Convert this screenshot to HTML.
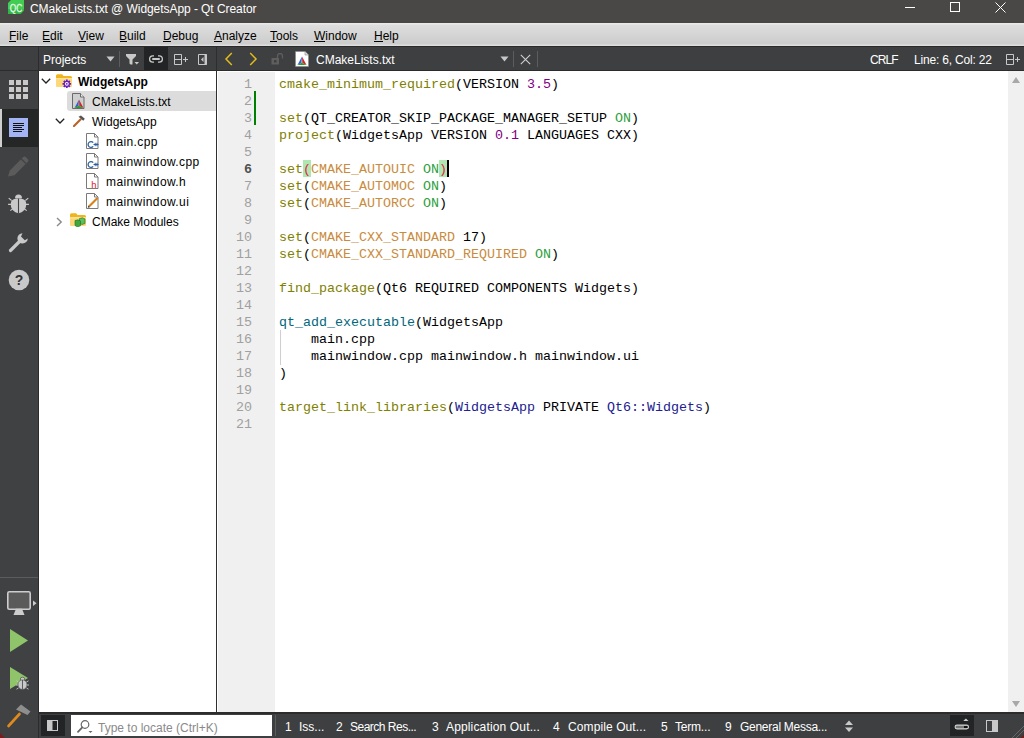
<!DOCTYPE html>
<html><head><meta charset="utf-8"><style>
*{margin:0;padding:0;box-sizing:border-box}
html,body{width:1024px;height:738px;overflow:hidden;background:#fff;font-family:"Liberation Sans",sans-serif;font-size:12px}
div,span,svg{position:absolute;display:block}
b{font-weight:normal}
.t{white-space:pre;line-height:14px}
#title{left:0;top:0;width:1024px;height:23px;background:#4a4846;color:#fff}
#menubar{left:0;top:23px;width:1024px;height:23px;background:linear-gradient(#e9e9e9 0,#e9e9e9 1px,#dedede 2px,#cccccc 21px,#dedede 22px);color:#000}
#menubar span{top:6px}
#menubar i{position:absolute;top:18px;height:1px;background:#000}
#toolbar{left:0;top:46px;width:1024px;height:25px;background:#3e3f41;border-bottom:1px solid #2c2c2d}
#modebar{left:0;top:71px;width:38px;height:667px;background:#404143}
#modeline{left:38px;top:46px;width:1px;height:692px;background:#2c2c2d}
#tree{left:39px;top:71px;width:177px;height:641px;background:#fff;color:#000}
#vsep{left:216px;top:46px;width:1px;height:666px;background:#2e2e2e}
#gutter{left:218px;top:72px;width:57px;height:640px;background:#f0f0f0}
#code{left:275px;top:71px;width:733px;height:641px;background:#fff}
#scroll{left:1008px;top:71px;width:16px;height:641px;background:#f0f0f0}
#status{left:39px;top:712px;width:985px;height:26px;background:#3e3f41;border-top:2px solid #2c2c2d;color:#fff}
.mono{font-family:"Liberation Mono",monospace;font-size:13.333px;line-height:17px;white-space:pre}
.ln{color:#a0a0a0;text-align:right;width:35px;left:217px;top:76px}
.f{color:#808000}
.q{color:#00677c}
.v{color:#c98c3e}
.on{color:#2f9f3f}
.n{color:#800080}
.k{color:#202090}
.k0{color:#000}
.bm{color:#e0284a}
.bm2{color:#e0284a}
.w{color:#fff}
</style></head><body>
<div id="title">
  <svg style="left:8px;top:0" width="16" height="14" viewBox="0 0 16 14"><path d="M3 0H16V10.5L12.5 14H0V3Z" fill="#41cd52"/><path d="M0 9H16V10.5L12.5 14H0Z" fill="#22a83a" opacity=".6"/><text x="8" y="11.5" font-family="Liberation Sans" font-size="11.5" fill="#e6f6e6" stroke="#e6f6e6" stroke-width="0.3" text-anchor="middle" textLength="12.5" lengthAdjust="spacingAndGlyphs">QC</text></svg>
  <span class="t" style="left:30px;top:2px;color:#fff;letter-spacing:-0.06px">CMakeLists.txt @ WidgetsApp - Qt Creator</span>
  <div style="left:905px;top:7px;width:10px;height:1px;background:#fff"></div>
  <div style="left:950px;top:2px;width:10px;height:10px;border:1px solid #fff"></div>
  <svg style="left:995px;top:2px" width="11" height="11" viewBox="0 0 11 11"><path d="M0.5 0.5L10.5 10.5M10.5 0.5L0.5 10.5" stroke="#fff" stroke-width="1"/></svg>
</div>

<div id="menubar">
<span class="t" style="left:9px">File</span><i style="left:9px;width:7px"></i>
<span class="t" style="left:42px">Edit</span><i style="left:43px;width:7px"></i>
<span class="t" style="left:78px">View</span><i style="left:79px;width:7px"></i>
<span class="t" style="left:119px">Build</span><i style="left:120px;width:7px"></i>
<span class="t" style="left:163px">Debug</span><i style="left:163px;width:8px"></i>
<span class="t" style="left:214px">Analyze</span><i style="left:214px;width:8px"></i>
<span class="t" style="left:270px">Tools</span><i style="left:270px;width:7px"></i>
<span class="t" style="left:314px">Window</span><i style="left:314px;width:11px"></i>
<span class="t" style="left:374px">Help</span><i style="left:374px;width:9px"></i>
</div>

<div id="toolbar">
  <span class="t w" style="left:43px;top:7px">Projects</span>
  <svg style="left:106px;top:56px;margin-top:-46px" width="9" height="6" viewBox="0 0 9 6"><path d="M0.5 0.5H8.5L4.5 5.5Z" fill="#c8c8c8"/></svg>
  <div style="left:119px;top:5px;width:1px;height:16px;background:#5c5d5f"></div>
  <svg style="left:125px;top:7px" width="15" height="13" viewBox="0 0 15 13"><path d="M1 1H11V3L7.5 6.5V11.5H5.5L4.5 10.5V6.5L1 3Z" fill="#c8c8c8"/><path d="M9.5 9H14L11.75 11.5Z" fill="#c8c8c8"/></svg>
  <div style="left:144px;top:0;width:24px;height:24px;background:#232425"></div>
  <svg style="left:148px;top:8px" width="16" height="10" viewBox="0 0 16 10"><path d="M6 1.8H4.8A3.2 3.2 0 0 0 4.8 8.2H6M10 1.8H11.2A3.2 3.2 0 0 1 11.2 8.2H10" stroke="#c8c8c8" stroke-width="1.3" fill="none"/><path d="M5 5H11" stroke="#c8c8c8" stroke-width="2" stroke-linecap="round"/></svg>
  <svg style="left:173px;top:7px" width="16" height="13" viewBox="0 0 16 13"><path d="M1.5 1.5H8.5V11.5H1.5ZM1.5 6.5H8.5" stroke="#c8c8c8" stroke-width="1" fill="none"/><path d="M10 6.5H15M12.5 4V9" stroke="#c8c8c8" stroke-width="1"/></svg>
  <svg style="left:197px;top:7px" width="11" height="13" viewBox="0 0 11 13"><path d="M1.5 1.5H9.5V11.5H1.5Z" stroke="#c8c8c8" stroke-width="1" fill="none"/><path d="M8.5 1V12" stroke="#c8c8c8" stroke-width="2"/><path d="M6.5 4V9L4 6.5Z" fill="#c8c8c8"/></svg>
  <svg style="left:224px;top:6px" width="10" height="14" viewBox="0 0 10 14"><path d="M7.8 1L2 7L7.8 13" stroke="#e4bb1c" stroke-width="1.5" fill="none"/></svg>
  <svg style="left:248px;top:6px" width="10" height="14" viewBox="0 0 10 14"><path d="M2.2 1L8 7L2.2 13" stroke="#e4bb1c" stroke-width="1.5" fill="none"/></svg>
  <svg style="left:271px;top:7px" width="14" height="12" viewBox="0 0 14 12"><path d="M0.5 5H8V11.5H0.5Z" fill="#5e5e5e"/><path d="M6.5 5V3A2.5 2.5 0 0 1 11.5 3V5.5" stroke="#5e5e5e" stroke-width="1.3" fill="none"/><rect x="3" y="7" width="2.5" height="2.5" fill="#3e3f41"/></svg>
  <svg style="left:295px;top:5px" width="14" height="16" viewBox="0 0 14 16"><path d="M0.5 0.5H10L13.5 4V15.5H0.5Z" fill="#fff" stroke="#888" stroke-width="0.6"/><path d="M10 0.5V4H13.5" fill="#ddd" stroke="#888" stroke-width="0.6"/><g transform="translate(0.5,1.5)"><path d="M6.5 4L2 12.5L6 10.5Z" fill="#3b5fd0"/><path d="M6.5 4L11 12.5L6.8 10.5Z" fill="#d02828"/><path d="M2 12.5L6.2 10.3L11 12.5Z" fill="#2aa02a"/></g></svg>
  <span class="t w" style="left:316px;top:7px">CMakeLists.txt</span>
  <svg style="left:500px;top:10px" width="9" height="6" viewBox="0 0 9 6"><path d="M0.5 0.5H8.5L4.5 5.5Z" fill="#c8c8c8"/></svg>
  <div style="left:513px;top:5px;width:1px;height:16px;background:#5c5d5f"></div>
  <svg style="left:520px;top:8px" width="11" height="11" viewBox="0 0 11 11"><path d="M0.8 0.8L10.2 10.2M10.2 0.8L0.8 10.2" stroke="#d0d0d0" stroke-width="1.1"/></svg>
  <div style="left:537px;top:5px;width:1px;height:16px;background:#5c5d5f"></div>
  <span class="t w" style="left:870px;top:7px;letter-spacing:-0.9px">CRLF</span>
  <span class="t w" style="left:914px;top:7px;letter-spacing:-0.18px">Line: 6, Col: 22</span>
  <svg style="left:1005px;top:7px" width="16" height="13" viewBox="0 0 16 13"><path d="M1.5 1.5H8.5V11.5H1.5ZM1.5 6.5H8.5" stroke="#c8c8c8" stroke-width="1" fill="none"/><path d="M10 6.5H15M12.5 4V9" stroke="#c8c8c8" stroke-width="1"/></svg>
</div>

<div id="modebar">
  <svg style="left:9px;top:9px" width="20" height="20" viewBox="0 0 20 20"><g fill="#c9c9c9">
  <rect x="0" y="0" width="5" height="5"/><rect x="7" y="0" width="5" height="5"/><rect x="14" y="0" width="5" height="5"/>
  <rect x="0" y="7" width="5" height="5"/><rect x="7" y="7" width="5" height="5"/><rect x="14" y="7" width="5" height="5"/>
  <rect x="0" y="14" width="5" height="5"/><rect x="7" y="14" width="5" height="5"/><rect x="14" y="14" width="5" height="5"/></g></svg>
  <div style="left:0;top:38px;width:38px;height:38px;background:#252626"></div>
  <div style="left:0;top:38px;width:2px;height:38px;background:#cfcfcf"></div>
  <svg style="left:9px;top:47px" width="20" height="20" viewBox="0 0 20 20"><rect x="0" y="0" width="19" height="19" fill="#a3b4f4"/><g stroke="#111" stroke-width="1"><path d="M4 5.5H15M4 7.5H15M4 9.5H13M4 11.5H15M4 13.5H13"/></g></svg>
  <svg style="left:8px;top:85px" width="21" height="21" viewBox="0 0 21 21"><path d="M0 20.5L1.8 14.5L15 1.3Q16.5 -0.2 18 1.3L19.7 3Q21.2 4.5 19.7 6L6.5 19.2Z" fill="#5b5b5c"/><path d="M13.3 3L18 7.7" stroke="#404143" stroke-width="1.2"/></svg>
  <svg style="left:8px;top:122px" width="21" height="21" viewBox="0 0 21 21"><g fill="#c9c9c9"><path d="M7 5.2A3.5 3.6 0 0 1 14 5.2Z"/><path d="M10.5 5.6C4 5.6 2.8 8.2 2.8 11.5C2.8 16 6 19.5 10.5 20.3C15 19.5 18.2 16 18.2 11.5C18.2 8.2 17 5.6 10.5 5.6Z"/></g><path d="M10.5 5.6V20.3" stroke="#404143" stroke-width="1.1"/><g stroke="#c9c9c9" stroke-width="1.1"><path d="M0.7 5.1L3.6 7.5M0.1 11.4H3M2.3 17.6L4.8 15.8M20.3 5.1L17.4 7.5M20.9 11.4H18M18.7 17.6L16.2 15.8"/></g></svg>
  <svg style="left:8px;top:161px" width="21" height="21" viewBox="0 0 21 21"><path d="M2.5 18.5L11.5 9.5" stroke="#c9c9c9" stroke-width="3.2" stroke-linecap="round"/><path d="M14.5 1.2A5.2 5.2 0 1 0 19.8 6.5L16.8 8.2L13 4.5Z" fill="#c9c9c9"/></svg>
  <svg style="left:8px;top:198px" width="22" height="22" viewBox="0 0 22 22"><circle cx="11" cy="11" r="10.3" fill="#c9c9c9"/><text x="11" y="16" font-family="Liberation Sans" font-weight="bold" font-size="14" fill="#333" text-anchor="middle">?</text></svg>
  <div style="left:0;top:506px;width:38px;height:1px;background:#5b5c5e"></div>
  <svg style="left:7px;top:520px" width="30" height="25" viewBox="0 0 30 25"><rect x="0.8" y="0.8" width="22.4" height="17.4" rx="1.5" fill="#5a5a5a" stroke="#cdcdcd" stroke-width="1.6"/><path d="M6.5 24L9 17.8H15L17.5 24Z" fill="#cdcdcd"/><path d="M26 9.5L29.5 12.2L26 15Z" fill="#cdcdcd"/></svg>
  <svg style="left:10px;top:558px" width="18" height="23" viewBox="0 0 18 23"><path d="M0 0L18 11.5L0 23Z" fill="#8fc46b"/></svg>
  <svg style="left:10px;top:596px" width="20" height="24" viewBox="0 0 20 24"><path d="M0 0L18 11L0 22Z" fill="#8fc46b"/><g transform="translate(6,10)"><g fill="#c9c9c9" stroke="#404143" stroke-width="0.6"><ellipse cx="6.5" cy="2" rx="2.2" ry="1.8"/><path d="M6.5 3C3 3 2 5.5 2 8C2 10.5 4 12.5 6.5 12.5C9 12.5 11 10.5 11 8C11 5.5 10 3 6.5 3Z"/></g><path d="M6.5 3V12.5" stroke="#404143" stroke-width="0.8"/><path d="M2.5 5L0.5 3.8M10.5 5L12.5 3.8M2 8H0M11 8H13M2.5 11L0.5 12.2M10.5 11L12.5 12.2" stroke="#c9c9c9" stroke-width="0.9"/></g></svg>
  <svg style="left:6px;top:632px" width="26" height="25" viewBox="0 0 26 25"><path d="M2.5 23L13.5 11" stroke="#e08a1e" stroke-width="2.6" stroke-linecap="round"/><path d="M10 6.5L15 1.5L24.5 8.5L21.5 12Z" fill="#8e8e8e"/></svg>
</div>

<div id="tree">
  <div style="left:28px;top:20px;width:149px;height:20px;background:#dcdcdc;border-radius:3px 0 0 3px"></div>
  <svg style="left:2px;top:7px" width="10" height="6" viewBox="0 0 10 6"><path d="M0.8 0.8L5 5L9.2 0.8" stroke="#222" stroke-width="1.3" fill="none"/></svg>
  <svg style="left:17px;top:3px" width="17" height="15" viewBox="0 0 17 15"><path d="M0 1.8A1.5 1.5 0 0 1 1.5 0.3H6.2L7.5 2H14.5A1.5 1.5 0 0 1 16 3.5V5H0Z" fill="#f0b41c"/><path d="M0 4.2H16V12A1 1 0 0 1 15 13H1A1 1 0 0 1 0 12Z" fill="#fdd87a"/><path d="M0 4.2H16V5.2H0Z" fill="#fde7a6"/><g transform="translate(10.8,9.8)"><path d="M0 -4.3V4.3M-4.3 0H4.3M-3 -3L3 3M3 -3L-3 3" stroke="#6a1fc0" stroke-width="1.8"/><circle r="3.1" fill="#6a1fc0"/><circle r="1.9" fill="#fff"/><circle r="0.9" fill="#6a1fc0"/></g></svg>
  <span class="t" style="left:39px;top:4px;font-weight:bold">WidgetsApp</span>
  <svg style="left:33px;top:22px" width="13" height="16" viewBox="0 0 13 16"><path d="M0.5 0.5H8.5L12 4V15.5H0.5Z" fill="#cfcfcf" stroke="#6a6a6a" stroke-width="1"/><path d="M8.5 0.5V4H12" fill="#eee" stroke="#6a6a6a" stroke-width="1"/><g transform="translate(0.5,2.5)"><path d="M6.5 4L2 12.5L6 10.5Z" fill="#3b5fd0"/><path d="M6.5 4L11 12.5L6.8 10.5Z" fill="#d02828"/><path d="M2 12.5L6.2 10.3L11 12.5Z" fill="#2aa02a"/></g></svg>
  <span class="t" style="left:53px;top:24px">CMakeLists.txt</span>
  <svg style="left:16px;top:47px" width="10" height="6" viewBox="0 0 10 6"><path d="M0.8 0.8L5 5L9.2 0.8" stroke="#222" stroke-width="1.3" fill="none"/></svg>
  <svg style="left:34px;top:44px" width="12" height="12" viewBox="0 0 12 12"><path d="M1 11L7.5 4.5" stroke="#b8622a" stroke-width="2.2" stroke-linecap="round"/><path d="M5.5 1.8L8 0.5L11.8 3.8L10.3 5.8Z" fill="#555"/></svg>
  <span class="t" style="left:53px;top:44px">WidgetsApp</span>
  <svg width="13" height="16" viewBox="0 0 13 16" style="left:47px;top:62px"><path d="M0.5 0.5H8.5L12 4V15.5H0.5Z" fill="#fff" stroke="#7a7a7a" stroke-width="1"/><path d="M8.5 0.5V4H12" fill="none" stroke="#7a7a7a" stroke-width="1"/><path d="M7.2 9.6A2.9 2.9 0 1 0 7.2 13.4" stroke="#2b609f" stroke-width="1.3" fill="none"/><path d="M7.5 11.5H12.5M9.2 9.8V13.2M11 9.8V13.2" stroke="#2b609f" stroke-width="1"/></svg>
  <span class="t" style="left:67px;top:64px;letter-spacing:0.4px">main.cpp</span>
  <svg width="13" height="16" viewBox="0 0 13 16" style="left:47px;top:82px"><path d="M0.5 0.5H8.5L12 4V15.5H0.5Z" fill="#fff" stroke="#7a7a7a" stroke-width="1"/><path d="M8.5 0.5V4H12" fill="none" stroke="#7a7a7a" stroke-width="1"/><path d="M7.2 9.6A2.9 2.9 0 1 0 7.2 13.4" stroke="#2b609f" stroke-width="1.3" fill="none"/><path d="M7.5 11.5H12.5M9.2 9.8V13.2M11 9.8V13.2" stroke="#2b609f" stroke-width="1"/></svg>
  <span class="t" style="left:67px;top:84px;letter-spacing:0.4px">mainwindow.cpp</span>
  <svg width="13" height="16" viewBox="0 0 13 16" style="left:47px;top:102px"><path d="M0.5 0.5H8.5L12 4V15.5H0.5Z" fill="#fff" stroke="#7a7a7a" stroke-width="1"/><path d="M8.5 0.5V4H12" fill="none" stroke="#7a7a7a" stroke-width="1"/><text x="5.2" y="14.6" font-family="Liberation Sans" font-size="9.5" fill="#e01818">h</text></svg>
  <span class="t" style="left:67px;top:104px;letter-spacing:0.4px">mainwindow.h</span>
  <svg width="13" height="16" viewBox="0 0 13 16" style="left:47px;top:122px"><path d="M0.5 0.5H8.5L12 4V15.5H0.5Z" fill="#fff" stroke="#7a7a7a" stroke-width="1"/><path d="M8.5 0.5V4H12" fill="none" stroke="#7a7a7a" stroke-width="1"/><path d="M3 13.5L11.5 5" stroke="#d8801a" stroke-width="2.2"/><path d="M1.8 14.7L2.3 12.6L3.9 14.2Z" fill="#333"/></svg>
  <span class="t" style="left:67px;top:124px;letter-spacing:0.4px">mainwindow.ui</span>
  <svg style="left:17px;top:146px" width="7" height="10" viewBox="0 0 7 10"><path d="M1 1L5.2 5L1 9" stroke="#8a8a8a" stroke-width="1.4" fill="none"/></svg>
  <svg style="left:31px;top:142px" width="16" height="14" viewBox="0 0 16 14"><path d="M0 1.8A1.5 1.5 0 0 1 1.5 0.3H6.2L7.5 2H14.5A1.5 1.5 0 0 1 16 3.5V5H0Z" fill="#f0b41c"/><path d="M0 4.2H16V12A1 1 0 0 1 15 13H1A1 1 0 0 1 0 12Z" fill="#fdd87a"/><path d="M0 4.2H16V5.2H0Z" fill="#fde7a6"/><g stroke="#1e6e1e" stroke-width="0.6"><path d="M9.5 5.5L12.5 4.8L15 6V10.5L12 11.5L9.5 10.3Z" fill="#5cc05c"/><path d="M5 7.5L8 6.8L10.5 8V12.8L7.5 14L5 12.5Z" fill="#3ea83e"/></g></svg>
  <span class="t" style="left:53px;top:144px">CMake Modules</span>
</div>

<div id="vsep"></div>
<div id="code"></div>
<div id="gutter"></div>
<div style="left:254px;top:91px;width:2px;height:34px;background:#008000"></div>
<div style="left:280px;top:330px;width:1px;height:35px;background:#cfcfcf"></div>
<div style="left:303px;top:160px;width:8px;height:17px;background:#b0e6b0"></div><div style="left:439px;top:160px;width:8px;height:17px;background:#b0e6b0"></div><div style="left:447px;top:160px;width:2px;height:17px;background:#000"></div>
<div id="scroll">
  <svg style="left:4px;top:6px" width="8" height="6" viewBox="0 0 8 6"><path d="M4 0L8 6H0Z" fill="#a8a8a8"/></svg>
  <svg style="left:4px;top:630px" width="8" height="6" viewBox="0 0 8 6"><path d="M0 0H8L4 6Z" fill="#a8a8a8"/></svg>
</div>
<div class="mono ln">1
2
3
4
5
<b style="color:#505050;font-weight:bold">6</b>
7
8
9
10
11
12
13
14
15
16
17
18
19
20
21</div>
<div class="mono" style="left:279px;top:76px"><b class="f">cmake_minimum_required</b><b class="k0">(VERSION </b><b class="n">3.5</b><b class="k0">)</b>

<b class="f">set</b><b class="k0">(QT_CREATOR_SKIP_PACKAGE_MANAGER_SETUP </b><b class="on">ON</b><b class="k0">)</b>
<b class="f">project</b><b class="k0">(WidgetsApp VERSION </b><b class="n">0.1</b><b class="k0"> LANGUAGES CXX)</b>

<b class="f">set</b><b class="bm">(</b><b class="v">CMAKE_AUTOUIC</b><b class="k0"> </b><b class="on">ON</b><b class="bm2">)</b>
<b class="f">set</b><b class="k0">(</b><b class="v">CMAKE_AUTOMOC</b><b class="k0"> </b><b class="on">ON</b><b class="k0">)</b>
<b class="f">set</b><b class="k0">(</b><b class="v">CMAKE_AUTORCC</b><b class="k0"> </b><b class="on">ON</b><b class="k0">)</b>

<b class="f">set</b><b class="k0">(</b><b class="v">CMAKE_CXX_STANDARD</b><b class="k0"> 17)</b>
<b class="f">set</b><b class="k0">(</b><b class="v">CMAKE_CXX_STANDARD_REQUIRED</b><b class="k0"> </b><b class="on">ON</b><b class="k0">)</b>

<b class="f">find_package</b><b class="k0">(Qt6 REQUIRED COMPONENTS Widgets)</b>

<b class="q">qt_add_executable</b><b class="k0">(WidgetsApp</b>
<b class="k0">    main.cpp</b>
<b class="k0">    mainwindow.cpp mainwindow.h mainwindow.ui</b>
<b class="k0">)</b>

<b class="f">target_link_libraries</b><b class="k0">(</b><b class="k">WidgetsApp</b><b class="k0"> PRIVATE </b><b class="k">Qt6::Widgets</b><b class="k0">)</b>
</div>

<div id="status">
  <div style="left:2px;top:1px;width:24px;height:21px;background:#232425"></div>
  <svg style="left:8px;top:6px" width="11" height="11" viewBox="0 0 11 11"><rect x="0" y="0" width="5.5" height="11" fill="#c9c9c9"/><rect x="5" y="0.5" width="5.5" height="10" fill="#232425" stroke="#c9c9c9" stroke-width="1"/></svg>
  <div style="left:32px;top:1px;width:201px;height:21px;background:#fff"></div>
  <svg style="left:38px;top:6px" width="17" height="14" viewBox="0 0 17 14"><circle cx="8" cy="4.5" r="3.8" stroke="#666" stroke-width="1.2" fill="none"/><path d="M5.3 7.3L1 11.8" stroke="#666" stroke-width="1.8" stroke-linecap="round"/><path d="M11.5 11H15.5L13.5 13Z" fill="#666"/></svg>
  <span class="t" style="left:59px;top:7px;color:#8a8a8a">Type to locate (Ctrl+K)</span>
  <div style="left:236px;top:1px;width:1px;height:21px;background:#5c5d5f"></div>
  <span class="t" style="left:246px;top:6px">1</span><span class="t" style="left:260px;top:6px">Iss...</span>
  <span class="t" style="left:297px;top:6px">2</span><span class="t" style="left:311px;top:6px;letter-spacing:-0.5px">Search Res...</span>
  <span class="t" style="left:393px;top:6px">3</span><span class="t" style="left:407px;top:6px;letter-spacing:0.15px">Application Out...</span>
  <span class="t" style="left:514px;top:6px">4</span><span class="t" style="left:529px;top:6px;letter-spacing:0.1px">Compile Out...</span>
  <span class="t" style="left:622px;top:6px">5</span><span class="t" style="left:636px;top:6px;letter-spacing:-0.2px">Term...</span>
  <span class="t" style="left:686px;top:6px">9</span><span class="t" style="left:701px;top:6px;letter-spacing:-0.27px">General Messa...</span>
  <svg style="left:805px;top:6px" width="10" height="13" viewBox="0 0 10 13"><path d="M5 0.5L9 5H1ZM1 7.5H9L5 12Z" fill="#c9c9c9"/></svg>
  <div style="left:911px;top:1px;width:24px;height:21px;background:#232425"></div>
  <svg style="left:915px;top:4px" width="17" height="13" viewBox="0 0 17 13"><path d="M9.3 3H14.5L11.9 0.6Z" fill="#d0d0d0"/><rect x="1.1" y="7.1" width="13.4" height="3.8" rx="1.9" fill="#777" stroke="#d0d0d0" stroke-width="1.1"/><rect x="10" y="8" width="3.5" height="2" fill="#111"/></svg>
  <svg style="left:947px;top:6px" width="12" height="12" viewBox="0 0 12 12"><rect x="6" y="0" width="6" height="12" fill="#c9c9c9"/><rect x="0.5" y="0.5" width="6" height="11" fill="#3e3f41" stroke="#c9c9c9" stroke-width="1"/></svg>
</div>

<div style="left:0;top:46px;width:1024px;height:1px;background:#2a2a2b"></div>
<svg style="left:1008px;top:722px" width="16" height="16" viewBox="0 0 16 16"><path d="M4 16L16 4M8 16L16 8" stroke="#66676a" stroke-width="1"/><path d="M12.5 16L16 12.5V16Z" fill="#7a1c1c"/></svg>
<svg style="left:0;top:733px" width="5" height="5" viewBox="0 0 5 5"><path d="M0 0L5 5H0Z" fill="#7a1c1c"/></svg>
<div id="modeline"></div></body></html>
